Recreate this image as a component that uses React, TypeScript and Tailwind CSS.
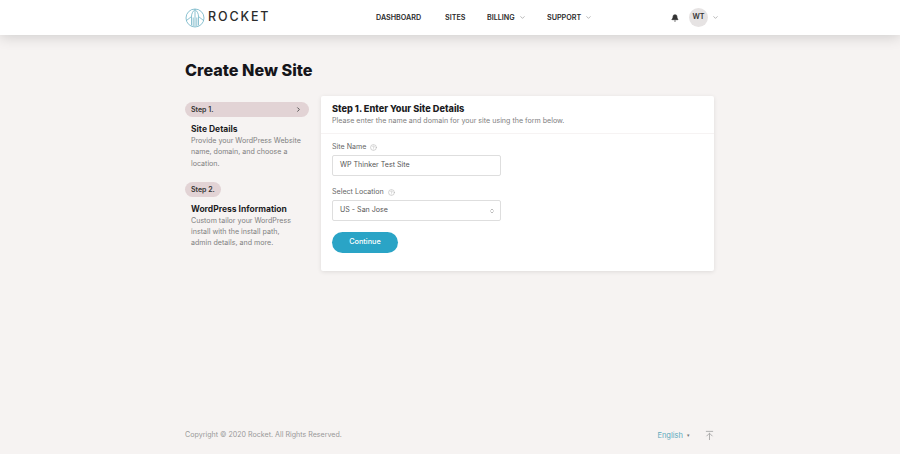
import { ChevronDown, ChevronRight, Bell, CircleHelp, ChevronsUpDown, ArrowUpToLine } from "lucide-react";

const Logo = () => (
  <svg width="20" height="20" viewBox="0 0 20 20" fill="none" stroke="#6fb3c5" strokeWidth="0.8">
    <circle cx="10" cy="10" r="9" />
    <path d="M6.5 17.5V8.5C6.5 5.5 8 3 10 1.5C12 3 13.5 5.5 13.5 8.5V17.5" />
    <path d="M10 1.5V18.5M8.2 18V9.5M11.8 18V9.5" />
    <path d="M1.5 12.5L6.5 8.5M18.5 12.5L13.5 8.5" />
  </svg>
);

const Header = () => (
  <header className="z-10 h-[35px] shrink-0 bg-white shadow-[0_2px_14px_rgba(0,0,0,0.16)]">
    <div className="mx-auto flex h-full w-[530px] items-center">
      <Logo />
      <span className="ml-[3px] w-[64px] text-[12.5px] font-medium tracking-[0.15em] text-[#2b2b2b]">ROCKET</span>
      <nav className="ml-[104px] mt-[1px] flex items-center text-[7.2px] font-semibold text-[#2b2b2b]">
        <span className="w-[69px]">DASHBOARD</span>
        <span className="w-[42px]">SITES</span>
        <span className="flex w-[60px] items-center gap-[4px]">
          BILLING <ChevronDown size={7} className="text-[#888]" />
        </span>
        <span className="flex items-center gap-[4px]">
          SUPPORT <ChevronDown size={7} className="text-[#888]" />
        </span>
      </nav>
      <div className="ml-auto mr-[-4px] flex items-center">
        <Bell size={8} fill="#333" className="text-[#333]" />
        <span className="ml-[10px] flex h-[19px] w-[19px] items-center justify-center rounded-full bg-[#e6e3e3] text-[7.2px] font-semibold text-[#333]">
          WT
        </span>
        <ChevronDown size={7} className="ml-[4px] text-[#888]" />
      </div>
    </div>
  </header>
);

const Step = ({ title, desc, label, wide }: { title: string; desc: string[]; label: string; wide?: boolean }) => (
  <div>
    <div
      className={`flex h-[15px] items-center justify-between rounded-full bg-[#e2d3d5] px-[6px] text-[7px] leading-[15px] font-semibold text-[#333] ${
        wide ? "w-full" : "w-[36px]"
      }`}
    >
      {label}
      {wide && <ChevronRight size={7} strokeWidth={3} className="mr-[1px] text-[#444]" />}
    </div>
    <h3 className="ml-[6px] mt-[7px] text-[8.5px] leading-[11px] font-bold text-[#1d1d1f]">{title}</h3>
    <div className="ml-[6px] text-[7.1px] leading-[11.3px] text-[#808080]">
      {desc.map((line) => (
        <p key={line}>{line}</p>
      ))}
    </div>
  </div>
);

const Field = ({ label, children }: { label: string; children: React.ReactNode }) => (
  <div>
    <div className="flex h-[10px] items-center gap-[4px] text-[7.1px] text-[#666]">
      {label}
      <CircleHelp size={7} className="text-[#b5b5b5]" />
    </div>
    <div className="mt-[3px] flex h-[21px] w-[169px] items-center justify-between rounded-[2px] border border-[#dedede] bg-white pl-[7px] pr-[5px] text-[7.1px] text-[#555]">
      {children}
    </div>
  </div>
);

export default function App() {
  return (
    <div
      className="flex h-screen flex-col overflow-hidden bg-[#f6f3f2]"
      style={{ fontFamily: "Inter, 'Noto Sans', sans-serif" }}
    >
      <Header />
      <main className="mx-auto w-[530px] flex-1">
        <h1 className="mt-[25px] text-[16.2px] leading-[20px] font-extrabold text-[#15151a]">Create New Site</h1>
        <div className="mt-[16px] flex items-start">
          <aside className="mt-[6px] flex w-[124px] flex-col gap-[13px]">
            <Step
              wide
              label="Step 1."
              title="Site Details"
              desc={["Provide your WordPress Website", "name, domain, and choose a", "location."]}
            />
            <Step
              label="Step 2."
              title="WordPress Information"
              desc={["Custom tailor your WordPress", "install with the install path,", "admin details, and more."]}
            />
          </aside>
          <section className="ml-[12px] h-[175px] w-[393px] rounded-[2px] bg-white shadow-[0_1px_4px_rgba(0,0,0,0.1)]">
            <div className="h-[38px] border-b border-[#f6f3f3] px-[11px] pt-[7px]">
              <h2 className="text-[9.2px] leading-[12px] font-extrabold text-[#1d1d1f]">Step 1. Enter Your Site Details</h2>
              <p className="mt-[1px] text-[7.1px] leading-[10px] text-[#808080]">
                Please enter the name and domain for your site using the form below.
              </p>
            </div>
            <div className="flex flex-col gap-[11px] px-[11px] pt-[8px]">
              <Field label="Site Name">WP Thinker Test Site</Field>
              <Field label="Select Location">
                US - San Jose
                <ChevronsUpDown size={6} className="text-[#777]" />
              </Field>
            </div>
            <button className="ml-[11px] mt-[11px] h-[21px] w-[66px] rounded-full bg-[#2aa4c6] text-[7.3px] font-medium text-white">
              Continue
            </button>
          </section>
        </div>
      </main>
      <footer className="mx-auto flex h-[24px] w-[530px] shrink-0 items-start justify-between text-[7.1px]">
        <span className="text-[#999]">Copyright © 2020 Rocket. All Rights Reserved.</span>
        <div className="flex items-center">
          <span className="text-[7.5px] text-[#5ba9bd]">English</span>
          <span className="ml-[4px] text-[5px] text-[#777]">▾</span>
          <ArrowUpToLine size={11} className="ml-[14px] text-[#aaa]" />
        </div>
      </footer>
    </div>
  );
}
